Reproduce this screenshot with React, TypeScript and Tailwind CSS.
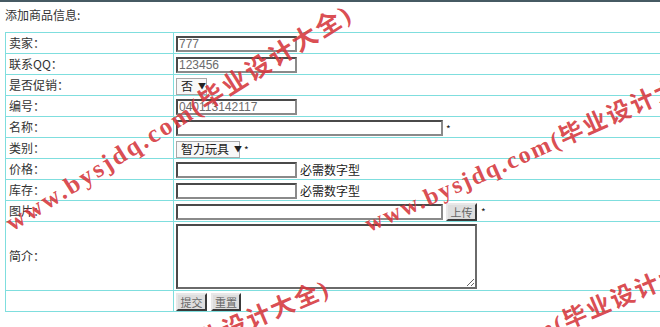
import React from 'react';

const cell = 'border border-[#7fdede] p-0';
const input =
  'h-[16px] border-2 border-t-[#4a4a4a] border-l-[#4a4a4a] border-b-[#8a8a8a] border-r-[#8a8a8a] bg-white px-[1px] text-[12px] text-[#6b6b6b] font-["Liberation_Sans",Arial,sans-serif] outline-none align-middle';
const btn =
  'h-[18px] px-0 border-2 border-t-[#e8e8e8] border-l-[#e8e8e8] border-b-[#3a3a3a] border-r-[#3a3a3a] bg-[#dedede] text-[11px] leading-[12px] text-[#666] align-middle';

function Row({ label, children, h = 'h-[21px]' }: { label: string; children?: React.ReactNode; h?: string }) {
  return (
    <tr className={h}>
      <td className={`${cell} w-[168px] pl-[3px] text-[#333]`}>{label}</td>
      <td className={`${cell} pl-[2px] whitespace-nowrap`}>{children}</td>
    </tr>
  );
}

function Watermark({ className }: { className: string }) {
  return (
    <span
      className={`absolute whitespace-nowrap origin-[0%_50%] leading-[30px] font-bold text-[#d5363c]/90 font-["Liberation_Serif","Noto_Sans_CJK_SC",serif] pointer-events-none ${className}`}
    >
      www.bysjdq.com(毕业设计大全)
    </span>
  );
}

export default function App() {
  return (
    <div className='relative w-[660px] h-[327px] overflow-hidden bg-white text-[12px] text-[#222] font-["Noto_Sans_CJK_SC",sans-serif]'>
      <div className="h-[2px] bg-[#465a63]" />
      <div className="pl-[5px] pt-[5px] h-[30px] leading-[16px] text-[#333]">添加商品信息:</div>
      <table className="ml-[5px] w-[720px] border-collapse">
        <tbody>
          <Row label="卖家：">
            <input className={`${input} w-[121px]`} defaultValue="777" />
          </Row>
          <Row label="联系QQ：">
            <input className={`${input} w-[121px]`} defaultValue="123456" />
          </Row>
          <Row label="是否促销：">
            <span className="inline-flex items-center h-[17px] w-[31px] border border-[#a9a9a9] bg-[#f8f8f8] pl-[4px] text-[12px] text-[#222] align-middle">
              否<span className="ml-[5px] text-[8px]">▼</span>
            </span>
          </Row>
          <Row label="编号：">
            <input className={`${input} w-[121px]`} defaultValue="040113142117" />
          </Row>
          <Row label="名称：">
            <input className={`${input} w-[267px]`} />
            <span className="ml-[3px] text-[10px] align-middle">*</span>
          </Row>
          <Row label="类别：">
            <span className="inline-flex items-center h-[17px] w-[64px] border border-[#a9a9a9] bg-[#f8f8f8] pl-[4px] text-[12px] text-[#222] align-middle">
              智力玩具<span className="ml-[5px] text-[8px]">▼</span>
            </span>
            <span className="ml-[4px] text-[10px] align-middle">*</span>
          </Row>
          <Row label="价格：">
            <input className={`${input} w-[121px]`} />
            <span className="ml-[3px] align-middle">必需数字型</span>
          </Row>
          <Row label="库存：">
            <input className={`${input} w-[121px]`} />
            <span className="ml-[3px] align-middle">必需数字型</span>
          </Row>
          <Row label="图片：">
            <input className={`${input} w-[267px]`} />
            <button className={`${btn} ml-[3px] w-[31px]`}>上传</button>
            <span className="ml-[4px] text-[10px] align-middle">*</span>
          </Row>
          <Row label="简介：" h="h-[69px]">
            <textarea className="block w-[301px] h-[65px] resize-y border-2 border-t-[#4a4a4a] border-l-[#4a4a4a] border-b-[#6a6a6a] border-r-[#6a6a6a] bg-white outline-none" />
          </Row>
          <Row label="">
            <button className={`${btn} w-[31px]`}>提交</button>
            <button className={`${btn} ml-[4px] w-[30px]`}>重置</button>
          </Row>
        </tbody>
      </table>

      <Watermark className="left-[8px] top-[210px] -rotate-[32deg] text-[25px] tracking-[2.5px]" />
      <Watermark className="left-[366px] top-[210px] -rotate-[24deg] text-[24px] tracking-[2px]" />
      <Watermark className="left-[-20px] top-[420px] -rotate-[23deg] text-[24px] tracking-[2px]" />
      <Watermark className="left-[368px] top-[390px] -rotate-[23deg] text-[24px] tracking-[2px]" />
    </div>
  );
}
